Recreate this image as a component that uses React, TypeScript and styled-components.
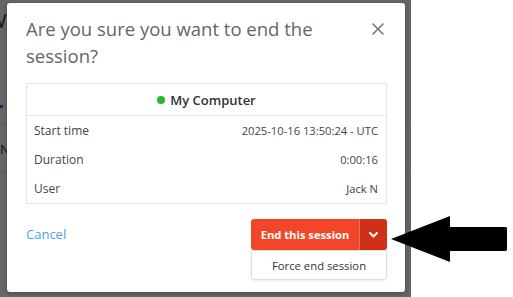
import { createGlobalStyle, styled } from "styled-components";

const GlobalStyle = createGlobalStyle`
  html, body {
    margin: 0;
    padding: 0;
    background: #fff;
  }
  body {
    font-family: "Open Sans", "Liberation Sans", sans-serif;
  }
  * {
    box-sizing: border-box;
  }
`;

const sessionInfo = [
  { label: "Start time", value: "2025-10-16 13:50:24 - UTC" },
  { label: "Duration", value: "0:00:16" },
  { label: "User", value: "Jack N" },
];

export default function App() {
  return (
    <Screen>
      <GlobalStyle />
      <Stage>
        {/* page that sits behind the dimmed overlay */}
        <BehindPage>
          <BehindTitle>Web sessions</BehindTitle>
          <BehindTab />
          <BehindRow>Name</BehindRow>
          <BehindRow />
        </BehindPage>

        <Backdrop>
          <Modal>
            <ModalHeader>
              <Title>Are you sure you want to end the session?</Title>
              <CloseButton aria-label="Close">
                <svg width="12" height="12" viewBox="0 0 12 12">
                  <path
                    d="M1 1 L11 11 M11 1 L1 11"
                    stroke="#777"
                    strokeWidth="1.6"
                    strokeLinecap="round"
                  />
                </svg>
              </CloseButton>
            </ModalHeader>

            <InfoCard>
              <CardHeader>
                <StatusDot />
                My Computer
              </CardHeader>
              {sessionInfo.map((row) => (
                <InfoRow key={row.label}>
                  <span>{row.label}</span>
                  <InfoValue>{row.value}</InfoValue>
                </InfoRow>
              ))}
            </InfoCard>

            <Footer>
              <CancelLink>Cancel</CancelLink>
              <SplitButton>
                <MainAction>End this session</MainAction>
                <ToggleAction aria-label="More options">
                  <svg width="9" height="6" viewBox="0 0 9 6">
                    <path
                      d="M1 1 L4.5 4.5 L8 1"
                      stroke="#fff"
                      strokeWidth="2"
                      fill="none"
                      strokeLinecap="round"
                      strokeLinejoin="round"
                    />
                  </svg>
                </ToggleAction>
                <DropdownMenu>
                  <MenuItem>Force end session</MenuItem>
                </DropdownMenu>
              </SplitButton>
            </Footer>
          </Modal>
        </Backdrop>
      </Stage>

      <PointerArrow width="117" height="47" viewBox="0 0 117 47">
        <polygon
          points="0,23 59,0 59,11 115,11 116,12 116,34 115,35 59,35 59,46"
          fill="#000"
        />
      </PointerArrow>
    </Screen>
  );
}

const Screen = styled.div`
  position: relative;
  display: flex;
  width: 513px;
  height: 297px;
  overflow: hidden;
  background: #fff;
`;

const Stage = styled.div`
  position: relative;
  width: 411px;
  height: 100%;
  overflow: hidden;
`;

const BehindPage = styled.div`
  margin-left: -12px;
  padding-top: 7px;
  color: #333;
`;

const BehindTitle = styled.h1`
  margin: 0;
  font-size: 20px;
  font-weight: 400;
  line-height: 28px;
`;

const BehindTab = styled.div`
  width: 15px;
  height: 3px;
  margin-top: 70px;
  margin-bottom: 16px;
  background: #1f78d1;
`;

const BehindRow = styled.div`
  display: flex;
  align-items: center;
  height: 48px;
  padding-left: 12px;
  border-top: 1px solid #e4e4e4;
  font-size: 13px;
`;

const Backdrop = styled.div`
  position: absolute;
  inset: 0;
  display: flex;
  padding: 3px 6px 5px 7px;
  background: rgba(0, 0, 0, 0.6);
`;

const Modal = styled.div`
  display: flex;
  flex-direction: column;
  width: 398px;
  height: 289px;
  padding: 12px 18px 0 19px;
  background: #fff;
  border-radius: 3px;
  box-shadow: 0 1px 4px rgba(0, 0, 0, 0.3);
`;

const ModalHeader = styled.div`
  display: flex;
  justify-content: space-between;
  align-items: flex-start;
`;

const Title = styled.h2`
  margin: 0;
  max-width: 320px;
  font-size: 18.5px;
  font-weight: 400;
  line-height: 27px;
  color: #666;
`;

const CloseButton = styled.button`
  display: flex;
  align-items: center;
  justify-content: center;
  width: 14px;
  height: 14px;
  margin: 7px 2px 0 0;
  padding: 0;
  border: 0;
  background: none;
  cursor: pointer;
`;

const InfoCard = styled.div`
  margin-top: 14px;
  border: 1px solid #e6e6e6;
`;

const CardHeader = styled.div`
  display: flex;
  align-items: center;
  justify-content: center;
  gap: 5px;
  height: 32px;
  border-bottom: 1px solid #e6e6e6;
  font-size: 13px;
  font-weight: 600;
  color: #333;
`;

const StatusDot = styled.span`
  width: 8px;
  height: 8px;
  border-radius: 50%;
  background: #2bb62b;
`;

const InfoRow = styled.div`
  display: flex;
  justify-content: space-between;
  align-items: center;
  height: 29px;
  padding: 0 8px 0 7px;
  font-size: 12px;
  color: #444;
`;

const InfoValue = styled.span`
  font-size: 11.2px;
`;

const Footer = styled.div`
  display: flex;
  justify-content: space-between;
  align-items: flex-start;
  margin-top: 15px;
`;

const CancelLink = styled.a`
  font-size: 13px;
  line-height: 31px;
  color: #4a9ff0;
  cursor: pointer;
`;

const SplitButton = styled.div`
  position: relative;
  display: flex;
  width: 136px;
  height: 31px;
`;

const MainAction = styled.button`
  flex: 1;
  padding: 0;
  border: 0;
  border-radius: 3px 0 0 3px;
  background: #f1462a;
  color: #fff;
  font-family: inherit;
  font-size: 11.2px;
  font-weight: 700;
  cursor: pointer;
`;

const ToggleAction = styled.button`
  display: flex;
  align-items: center;
  justify-content: center;
  width: 28px;
  padding: 0;
  border: 0;
  border-left: 1px solid rgba(255, 255, 255, 0.35);
  border-radius: 0 3px 3px 0;
  background: #cf3018;
  cursor: pointer;
`;

const DropdownMenu = styled.div`
  position: absolute;
  top: 100%;
  left: 0;
  right: 0;
  background: #fff;
  border: 1px solid #dedede;
  border-radius: 0 0 3px 3px;
  box-shadow: 0 1px 2px rgba(0, 0, 0, 0.08);
`;

const MenuItem = styled.div`
  display: flex;
  align-items: center;
  justify-content: center;
  height: 28px;
  font-size: 11.3px;
  color: #333;
`;

const PointerArrow = styled.svg`
  position: absolute;
  left: 391px;
  top: 216px;
`;
